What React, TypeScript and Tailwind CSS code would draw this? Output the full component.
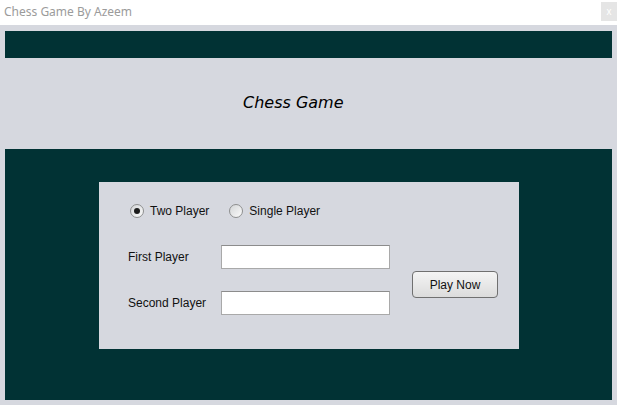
import React, { useState } from 'react';

type Mode = 'two' | 'single';

const Radio = ({ checked, label, onClick }: { checked: boolean; label: string; onClick: () => void }) => (
  <button onClick={onClick} className="flex items-center gap-[6px] outline-none">
    <span className="w-[14px] h-[14px] rounded-full border border-[#8e8f8f] bg-gradient-to-br from-[#d4d6d8] to-[#fbfbfb] flex items-center justify-center">
      {checked && <span className="w-[6px] h-[6px] rounded-full bg-[#1c1c1c]" />}
    </span>
    <span className="text-[12px] text-[#111]">{label}</span>
  </button>
);

const App: React.FC = () => {
  const [mode, setMode] = useState<Mode>('two');
  const [first, setFirst] = useState('');
  const [second, setSecond] = useState('');

  return (
    <div className="w-[617px] h-[405px] bg-[#d6d8df] flex flex-col overflow-hidden font-['Liberation_Sans',Arial,sans-serif]">
      {/* Title bar */}
      <div className="h-[25px] bg-white flex items-start justify-between shrink-0">
        <span className="pl-[4px] pt-[3px] text-[12px] text-[#9b9b9b] font-['Noto_Sans',sans-serif] leading-[17px]">
          Chess Game By Azeem
        </span>
        <div className="w-[16px] h-[19px] mt-[2px] bg-[#e5e5e5] flex items-center justify-center text-[10px] text-white leading-none">
          x
        </div>
      </div>

      {/* Body */}
      <div className="flex-1 flex flex-col px-[5px] pt-[6px] pb-[5px]">
        <div className="h-[27px] bg-[#013234] shrink-0" />

        <div className="h-[91px] flex items-center pl-[238px] shrink-0">
          <h1 className="italic text-[16px] text-black font-['DejaVu_Sans',sans-serif] -mt-[2px]">Chess Game</h1>
        </div>

        <div className="flex-1 bg-[#013234] pt-[33px] pl-[94px]">
          <div className="w-[420px] h-[167px] bg-[#d6d8df] pt-[22px] pl-[29px]">
            <div className="flex items-center gap-[20px] ml-[2px] h-[14px]">
              <Radio checked={mode === 'two'} label="Two Player" onClick={() => setMode('two')} />
              <Radio checked={mode === 'single'} label="Single Player" onClick={() => setMode('single')} />
            </div>

            <div className="flex items-center mt-[27px]">
              <div className="flex flex-col gap-[22px]">
                <div className="flex items-center">
                  <label className="w-[93px] text-[12px] text-[#111]">First Player</label>
                  <input
                    value={first}
                    onChange={(e) => setFirst(e.target.value)}
                    className="w-[169px] h-[24px] bg-white border border-[#a9a9a9] border-t-[#8c8c8c] outline-none px-1 text-[12px]"
                  />
                </div>
                <div className="flex items-center">
                  <label className="w-[93px] text-[12px] text-[#111]">Second Player</label>
                  <input
                    value={second}
                    onChange={(e) => setSecond(e.target.value)}
                    className="w-[169px] h-[24px] bg-white border border-[#a9a9a9] border-t-[#8c8c8c] outline-none px-1 text-[12px]"
                  />
                </div>
              </div>
              <button className="ml-[22px] mt-[9px] w-[86px] h-[27px] rounded-[4px] border border-[#707070] bg-gradient-to-b from-[#f4f4f4] to-[#dcdcdc] text-[12px] text-[#111]">
                Play Now
              </button>
            </div>
          </div>
        </div>
      </div>
    </div>
  );
};

export default App;
